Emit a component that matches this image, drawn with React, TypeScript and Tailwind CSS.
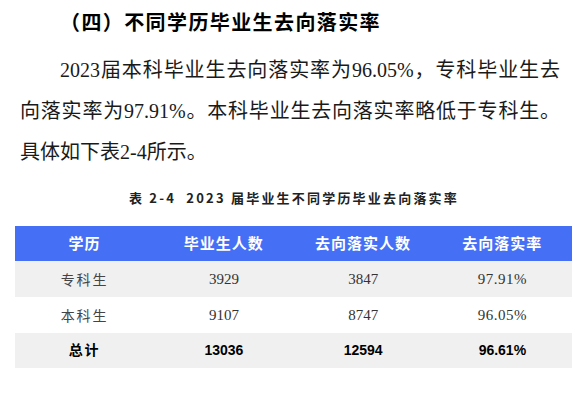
import React from "react";

const serifStack = '"Liberation Serif", "Noto Sans CJK SC", serif';
const sansStack = '"Noto Sans CJK SC", sans-serif';

const rows = [
  { name: "专科生", grad: "3929", placed: "3847", rate: "97.91%", bg: "bg-[#f0f0f0]" },
  { name: "本科生", grad: "9107", placed: "8747", rate: "96.05%", bg: "bg-white" },
];

export default function App() {
  return (
    <div className="w-[588px] h-[398px] bg-white overflow-hidden text-black">
      <div className="pl-[20px] w-[560px]">
        <div
          className="pl-[40px] text-[20px] leading-[44px] font-bold tracking-[1.4px] text-black"
          style={{ fontFamily: sansStack }}
        >
          （四）不同学历毕业生去向落实率
        </div>
        <div
          className="mt-[6px] text-[20px] leading-[41px] text-[#1a1a1a]"
          style={{ fontFamily: serifStack }}
        >
          <div className="pl-[40px] text-justify [text-align-last:justify]">
            2023届本科毕业生去向落实率为96.05%，专科毕业生去
          </div>
          <div className="text-justify [text-align-last:justify]">
            向落实率为97.91%。本科毕业生去向落实率略低于专科生。
          </div>
          <div>具体如下表2-4所示。</div>
        </div>
      </div>

      <div
        className="mt-[15px] text-center text-[13px] leading-[20px] font-bold tracking-[2.2px] text-[#222] whitespace-pre"
        style={{ fontFamily: sansStack }}
      >
        {"表 2-4  2023 届毕业生不同学历毕业去向落实率"}
      </div>

      <div className="ml-[15px] mt-[18px] w-[557px]">
        <div
          className="grid grid-cols-4 h-[35px] items-center bg-[#4570f6] text-white text-[15px] font-bold tracking-[1px] text-center"
          style={{ fontFamily: sansStack }}
        >
          <div>学历</div>
          <div>毕业生人数</div>
          <div>去向落实人数</div>
          <div>去向落实率</div>
        </div>
        {rows.map((r) => (
          <div
            key={r.name}
            className={`grid grid-cols-4 h-[36px] items-center text-center text-[15px] text-[#333] ${r.bg}`}
            style={{ fontFamily: serifStack }}
          >
            <div className="text-[14px] tracking-[2px] text-[#444]" style={{ fontFamily: sansStack }}>
              {r.name}
            </div>
            <div>{r.grad}</div>
            <div>{r.placed}</div>
            <div className="tracking-[0.5px]">{r.rate}</div>
          </div>
        ))}
        <div
          className="grid grid-cols-4 h-[35px] items-center text-center bg-[#f0f0f0] text-black font-bold text-[14px]"
          style={{ fontFamily: '"Liberation Sans", "Noto Sans CJK SC", sans-serif' }}
        >
          <div className="tracking-[2px]">总计</div>
          <div>13036</div>
          <div>12594</div>
          <div>96.61%</div>
        </div>
      </div>
    </div>
  );
}
